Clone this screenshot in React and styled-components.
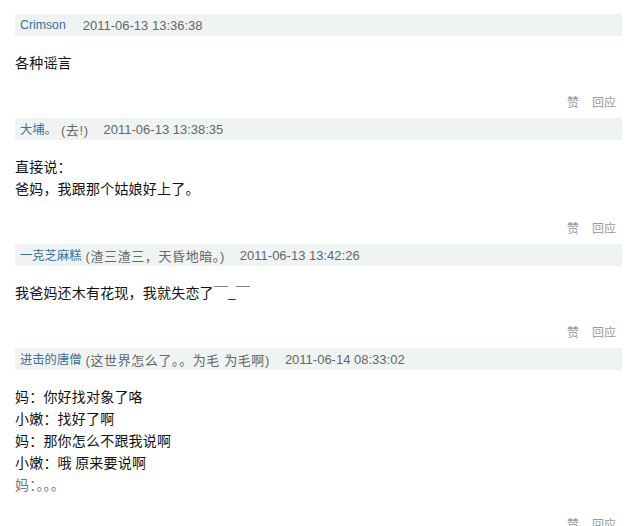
import React from 'react'
import styled, { createGlobalStyle } from 'styled-components';

const GlobalStyle = createGlobalStyle`
  html, body {
    margin: 0;
    padding: 0;
    background: #fff;
  }
  body {
    font-family: "Liberation Sans", Arial, "Noto Sans CJK SC", sans-serif;
  }
`;

const Page = styled.div`
  width: 636px;
  height: 526px;
  overflow: hidden;
  padding: 14px 14px 0 15px;
  box-sizing: border-box;
`;

const Comment = styled.div`
  display: flex;
  flex-direction: column;
  padding-bottom: 9px;
`;

const Header = styled.div`
  display: flex;
  align-items: center;
  height: 22px;
  padding-left: 5px;
  background-color: #eff4f3;
  font-size: 13px;
  white-space: nowrap;
`;

const Name = styled.span`
  color: #3d6f9e;
  font-size: 12.3px;
`;

const Sign = styled.span`
  color: #666;
  margin-left: 4px;
  letter-spacing: 0.6px;
`;

const Time = styled.span`
  color: #666;
  margin-left: ${p => (p.$first ? '17px' : '15px')};
`;

const Body = styled.div`
  margin-top: 15px;
  font-family: "Noto Sans CJK SC", "Liberation Sans", sans-serif;
  font-size: 14px;
  line-height: 22px;
  letter-spacing: 0.2px;
`;

const Line = styled.div`
  color: ${p => (p.$faded ? '#777' : '#111')};
`;

const Actions = styled.div`
  display: flex;
  justify-content: flex-end;
  gap: 13px;
  margin-top: 20px;
  padding-right: 6px;
  height: 16px;
  align-items: center;
  font-family: "Noto Sans CJK SC", sans-serif;
  font-size: 12px;
  color: #9a9a9a;
`;

const comments = [
  {
    name: 'Crimson',
    time: '2011-06-13 13:36:38',
    lines: ['各种谣言'],
  },
  {
    name: '大埔。',
    sign: '(去!)',
    time: '2011-06-13 13:38:35',
    lines: ['直接说：', '爸妈，我跟那个姑娘好上了。'],
  },
  {
    name: '一克芝麻糕',
    sign: '(渣三渣三，天昏地暗。)',
    time: '2011-06-13 13:42:26',
    lines: ['我爸妈还木有花现，我就失恋了￣_￣'],
  },
  {
    name: '进击的唐僧',
    sign: '(这世界怎么了。。为毛 为毛啊)',
    time: '2011-06-14 08:33:02',
    lines: ['妈：你好找对象了咯', '小嫩：找好了啊', '妈：那你怎么不跟我说啊', '小嫩：哦 原来要说啊', '妈：。。。'],
  },
];

function App() {
  return (
    <>
      <GlobalStyle />
      <Page>
        {comments.map((c, i) => (
          <Comment key={i}>
            <Header>
              <Name>{c.name}</Name>
              {c.sign && <Sign>{c.sign}</Sign>}
              <Time $first={!c.sign}>{c.time}</Time>
            </Header>
            <Body>
              {c.lines.map((l, j) => (
                <Line key={j} $faded={i === 3 && j === c.lines.length - 1}>{l}</Line>
              ))}
            </Body>
            <Actions>
              <span>赞</span>
              <span>回应</span>
            </Actions>
          </Comment>
        ))}
      </Page>
    </>
  )
}

export default App
